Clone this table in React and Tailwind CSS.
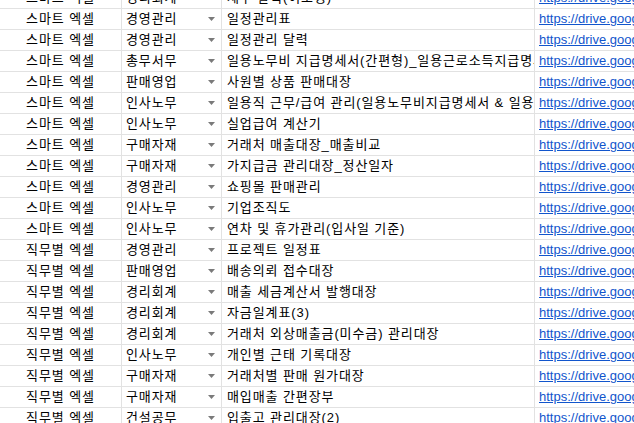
const rows = [
  ['스마트 엑셀', '경리회계', '세무 달력(이조정)'],
  ['스마트 엑셀', '경영관리', '일정관리표'],
  ['스마트 엑셀', '경영관리', '일정관리 달력'],
  ['스마트 엑셀', '총무서무', '일용노무비 지급명세서(간편형)_일용근로소득지급명세서'],
  ['스마트 엑셀', '판매영업', '사원별 상품 판매대장'],
  ['스마트 엑셀', '인사노무', '일용직 근무/급여 관리(일용노무비지급명세서 & 일용근로소득지급명세서)'],
  ['스마트 엑셀', '인사노무', '실업급여 계산기'],
  ['스마트 엑셀', '구매자재', '거래처 매출대장_매출비교'],
  ['스마트 엑셀', '구매자재', '가지급금 관리대장_정산일자'],
  ['스마트 엑셀', '경영관리', '쇼핑몰 판매관리'],
  ['스마트 엑셀', '인사노무', '기업조직도'],
  ['스마트 엑셀', '인사노무', '연차 및 휴가관리(입사일 기준)'],
  ['직무별 엑셀', '경영관리', '프로젝트 일정표'],
  ['직무별 엑셀', '판매영업', '배송의뢰 접수대장'],
  ['직무별 엑셀', '경리회계', '매출 세금계산서 발행대장'],
  ['직무별 엑셀', '경리회계', '자금일계표(3)'],
  ['직무별 엑셀', '경리회계', '거래처 외상매출금(미수금) 관리대장'],
  ['직무별 엑셀', '인사노무', '개인별 근태 기록대장'],
  ['직무별 엑셀', '구매자재', '거래처별 판매 원가대장'],
  ['직무별 엑셀', '구매자재', '매입매출 간편장부'],
  ['직무별 엑셀', '건설공무', '입출고 관리대장(2)'],
];

const Arrow = () => (
  <svg width="7" height="4" viewBox="0 0 7 4" className="shrink-0">
    <polygon points="0,0 7,0 3.5,4" fill="#7a7a7a" />
  </svg>
);

const Row = ({ cat, dept, title }) => (
  <div className="grid grid-cols-[122px_100px_313px_1fr] h-[21px] border-b border-[#e2e2e2]">
    <div className="border-r border-[#e2e2e2] flex items-center justify-center whitespace-nowrap overflow-hidden tracking-[0.9px]">
      {cat}
    </div>
    <div className="border-r border-[#e2e2e2] flex items-center justify-between pl-[4px] pr-[6px] overflow-hidden">
      <span className="whitespace-nowrap tracking-[0.9px]">{dept}</span>
      <Arrow />
    </div>
    <div className="border-r border-[#e2e2e2] flex items-center pl-[5px] overflow-hidden whitespace-nowrap tracking-[0.9px]">
      {title}
    </div>
    <div className="flex items-center pl-[4px] overflow-hidden whitespace-nowrap">
      <span className="text-[#1155cc] underline">https://drive.google.com/file/d/</span>
    </div>
  </div>
);

export default function App() {
  return (
    <div className="w-[634px] h-[423px] overflow-hidden bg-white text-black">
      <div className="-mt-[12px] text-[13px] leading-[20px] font-['Liberation_Sans','Noto_Sans_CJK_KR',sans-serif]">
        {rows.map(([cat, dept, title], i) => (
          <Row key={i} cat={cat} dept={dept} title={title} />
        ))}
      </div>
    </div>
  );
}
